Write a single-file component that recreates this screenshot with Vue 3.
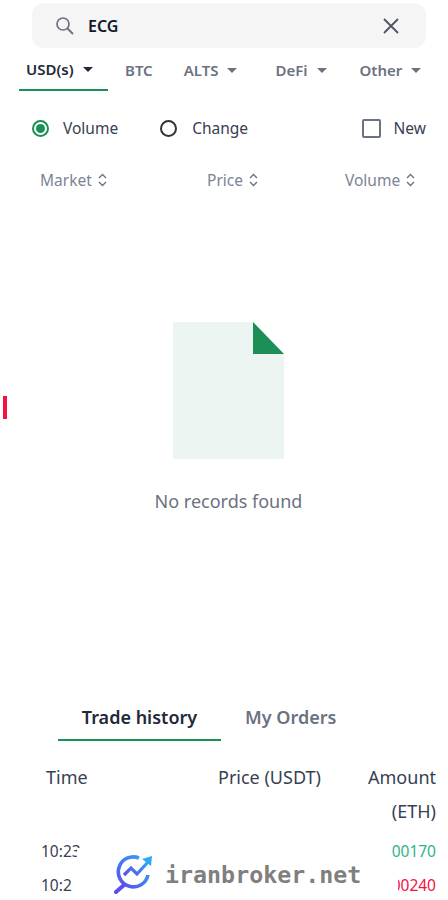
<script setup>
const tabs = [
  { name: "USD(s)", caret: true, active: true },
  { name: "BTC", caret: false },
  { name: "ALTS", caret: true },
  { name: "DeFi", caret: true },
  { name: "Other", caret: true },
];

const columns = ["Market", "Price", "Volume"];

const trades = [
  { time: "10:23", amount: "00170", cls: "up" },
  { time: "10:2", amount: "00240", cls: "down" },
];
</script>

<template>
  <div class="page">
    <span class="edge-mark"></span>

    <div class="search">
      <svg class="search-icon" width="22" height="22" viewBox="0 0 22 22" fill="none">
        <circle cx="9" cy="9" r="6" stroke="#6b7280" stroke-width="1.7" />
        <path d="M13.5 13.5 L19 19" stroke="#6b7280" stroke-width="1.9" />
      </svg>
      <span class="search-text">ECG</span>
      <svg class="clear-icon" width="16" height="16" viewBox="0 0 16 16" fill="none">
        <path d="M1 1 L15 15 M15 1 L1 15" stroke="#4b5563" stroke-width="1.8" />
      </svg>
    </div>

    <div class="tabs">
      <div v-for="tab in tabs" :key="tab.name" class="tab" :class="{ active: tab.active }">
        {{ tab.name }}<i v-if="tab.caret" class="caret"></i>
      </div>
    </div>

    <div class="filters">
      <div class="radio-item">
        <span class="radio checked"><span class="dot"></span></span>Volume
      </div>
      <div class="radio-item second">
        <span class="radio"></span>Change
      </div>
      <div class="check-item">
        <span class="checkbox"></span>New
      </div>
    </div>

    <div class="columns">
      <div v-for="col in columns" :key="col" class="column">
        {{ col }}
        <svg width="9" height="14" viewBox="0 0 9 14" fill="none">
          <path d="M1 5 L4.5 1.5 L8 5 M1 9 L4.5 12.5 L8 9" stroke="#6b7280" stroke-width="1.4" />
        </svg>
      </div>
    </div>

    <div class="empty">
      <svg width="111" height="137" viewBox="0 0 111 137">
        <path d="M0 0 H80 L111 32 V137 H0 Z" fill="#ecf5f2" />
        <path d="M80 0 L111 32 H80 Z" fill="#1b8f55" />
      </svg>
      <p>No records found</p>
    </div>

    <div class="history-tabs">
      <div class="history-tab active">Trade history</div>
      <div class="history-tab">My Orders</div>
    </div>

    <div class="history-head">
      <div class="head-time">Time</div>
      <div class="head-price">Price (USDT)</div>
      <div class="head-amount">Amount<br />(ETH)</div>
    </div>

    <div v-for="t in trades" :key="t.amount" class="trade">
      <span>{{ t.time }}</span>
      <span :class="t.cls">{{ t.amount }}</span>
    </div>

    <div class="watermark">
      <svg width="42" height="40" viewBox="0 0 42 40" fill="none">
        <defs>
          <linearGradient id="wm" x1="0" y1="1" x2="1" y2="0">
            <stop offset="0" stop-color="#5b4df0" />
            <stop offset="1" stop-color="#2fa8f0" />
          </linearGradient>
        </defs>
        <path d="M26 4 A15 15 0 1 0 35 21" stroke="url(#wm)" stroke-width="3.6" />
        <path d="M11 31 L3 38" stroke="#5b4df0" stroke-width="4" stroke-linecap="round" />
        <path d="M11 21 L18 14 L24 20 L35 8" stroke="url(#wm)" stroke-width="3.2" />
        <path d="M29 5 L39 2 L38 12 Z" fill="#2fa8f0" />
      </svg>
      <span>iranbroker.net</span>
    </div>
  </div>
</template>

<style>
body {
  background: #fff;
}
</style>

<style scoped>
.page {
  position: relative;
  width: 448px;
  height: 900px;
  overflow: hidden;
  background: #fff;
  font-family: "Noto Sans", "Open Sans", sans-serif;
  color: #1f2937;
}

.edge-mark {
  position: absolute;
  left: 3px;
  top: 396px;
  width: 4px;
  height: 23px;
  background: #f5113f;
}

.search {
  display: flex;
  align-items: center;
  height: 45px;
  margin: 3px 22px 0 32px;
  padding: 0 27px 0 22px;
  border-radius: 12px;
  background: #f5f5f5;
}

.search-icon {
  flex: none;
}

.search-text {
  margin-left: 12px;
  font-size: 16px;
  font-weight: 600;
  color: #111827;
}

.clear-icon {
  margin-left: auto;
}

.tabs {
  display: flex;
  height: 43px;
  margin-left: 19px;
}

.tab {
  display: flex;
  align-items: center;
  padding: 0 7px;
  font-size: 15px;
  font-weight: 600;
  color: #6b7280;
  height: 43px;
  box-sizing: border-box;
}

.tab.active {
  width: 89px;
  color: #1f2937;
  border-bottom: 2px solid #1b8f55;
}

.tab:nth-child(2) {
  margin-left: 10px;
}

.tab:nth-child(3) {
  margin-left: 17px;
}

.tab:nth-child(4) {
  margin-left: 24px;
}

.tab:nth-child(5) {
  margin-left: 19px;
}

.caret {
  width: 0;
  height: 0;
  margin: 2px 0 0 9px;
  border-left: 5.5px solid transparent;
  border-right: 5.5px solid transparent;
  border-top: 5px solid currentColor;
}

.filters {
  display: flex;
  align-items: center;
  height: 32px;
  margin-top: 21px;
  padding-left: 32px;
  font-size: 15.5px;
  color: #374151;
}

.radio-item,
.check-item {
  display: flex;
  align-items: center;
}

.radio-item.second {
  margin-left: 42px;
}

.radio-item.second .radio {
  margin-right: 15px;
  border-color: #333;
}

.check-item {
  margin-left: auto;
  margin-right: 22px;
}

.radio {
  display: flex;
  align-items: center;
  justify-content: center;
  box-sizing: border-box;
  width: 17px;
  height: 17px;
  margin-right: 14px;
  border: 2px solid #374151;
  border-radius: 50%;
}

.radio.checked {
  border-color: #1b8f55;
}

.dot {
  width: 9px;
  height: 9px;
  border-radius: 50%;
  background: #1b8f55;
}

.checkbox {
  box-sizing: border-box;
  width: 19px;
  height: 19px;
  margin-right: 13px;
  border: 2px solid #6b7280;
  border-radius: 2px;
}

.columns {
  display: flex;
  align-items: center;
  height: 24px;
  margin-top: 24px;
  padding-left: 40px;
  font-size: 15.5px;
  color: #7b8494;
}

.column {
  display: flex;
  align-items: center;
  gap: 6px;
}

.column:nth-child(1) {
  width: 167px;
}

.column:nth-child(2) {
  width: 138px;
}

.empty {
  display: flex;
  flex-direction: column;
  align-items: center;
  width: 457px;
  margin-top: 130px;
}

.empty svg {
  display: block;
}

.empty p {
  margin: 29px 0 0;
  font-size: 18px;
  line-height: 26px;
  color: #6b7280;
}

.history-tabs {
  display: flex;
  height: 50px;
  margin-top: 177px;
  margin-left: 58px;
  font-size: 18px;
  font-weight: 600;
  color: #6b7280;
}

.history-tab {
  display: flex;
  align-items: center;
  height: 50px;
  padding-top: 4px;
  box-sizing: border-box;
}

.history-tab.active {
  justify-content: center;
  width: 163px;
  color: #1f2937;
  border-bottom: 2px solid #1b8f55;
}

.history-tab:nth-child(2) {
  margin-left: 24px;
  padding-bottom: 2px;
}

.history-head {
  display: flex;
  margin-top: 19px;
  padding-left: 46px;
  font-size: 18px;
  line-height: 34px;
  color: #374151;
}

.head-time {
  width: 172px;
}

.head-price {
  width: 150px;
}

.head-amount {
  width: 68px;
  text-align: right;
  white-space: nowrap;
}

.trade {
  display: flex;
  justify-content: space-between;
  height: 34px;
  padding: 0 12px 0 41px;
  font-size: 15.5px;
  line-height: 20px;
  color: #374151;
}

.history-head + .trade {
  margin-top: 13px;
}

.up {
  color: #2db48a;
}

.down {
  color: #f5113f;
}

.watermark {
  position: absolute;
  left: 77px;
  top: 848px;
  display: flex;
  align-items: center;
  gap: 10px;
  width: 308px;
  height: 52px;
  box-sizing: border-box;
  padding-left: 36px;
  background: #fff;
  font-family: "DejaVu Sans Mono", monospace;
  font-size: 23.3px;
  font-weight: 700;
  color: #7f7f7f;
}

.watermark::after {
  content: "";
  position: absolute;
  left: 100%;
  top: 24px;
  width: 13px;
  height: 28px;
  background: #fff;
}
</style>
